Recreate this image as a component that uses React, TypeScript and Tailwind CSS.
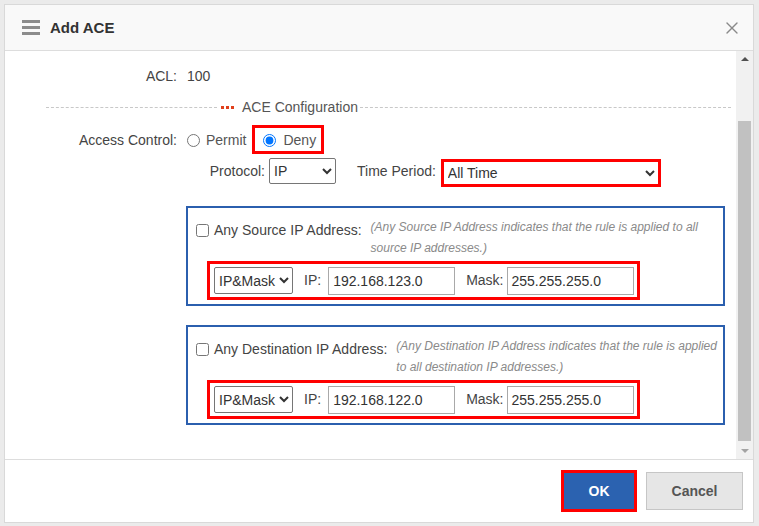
import { X } from "lucide-react";

const font = { fontFamily: '"Liberation Sans", Arial, sans-serif' };

function Dots() {
  return (
    <span className="flex items-center gap-[2px] mr-[8px]">
      <span className="w-[3px] h-[3px] bg-[#e0401c]" />
      <span className="w-[3px] h-[3px] bg-[#e0401c]" />
      <span className="w-[3px] h-[3px] bg-[#e0401c]" />
    </span>
  );
}

function AddressBox({
  label,
  hint,
  ip,
}: {
  label: string;
  hint: string;
  ip: string;
}) {
  return (
    <div className="ml-[181px] mt-[19px] w-[539px] border-2 border-[#2b5fae] pt-[8px] pb-[4px]">
      <div className="flex items-start pl-[8px] pr-[4px]">
        <input type="checkbox" className="mt-[8px] w-[13px] h-[13px] shrink-0" />
        <span className="ml-[5px] mt-[4px] leading-[20px] text-[14px] text-[#444] whitespace-nowrap">{label}</span>
        <span className="ml-[9px] mt-[1px] flex-1 text-[12px] italic leading-[21px] text-[#8a8a8a]">{hint}</span>
      </div>
      <div className="ml-[19px] mt-[2px] w-[433px] h-[39px] border-[3px] border-[#ff0000] flex items-center pl-[4px]">
        <select className="w-[79px] h-[27px] border border-[#767676] rounded-[2px] text-[14px] text-[#333] pl-0 pr-0 bg-white">
          <option>IP&amp;Mask</option>
        </select>
        <span className="ml-[11px] text-[14px] text-[#444]">IP:</span>
        <input
          readOnly
          value={ip}
          className="ml-[7px] w-[127px] h-[28px] border border-[#a9a9a9] pl-[4px] text-[14px] text-[#333]"
        />
        <span className="ml-[11px] text-[14px] text-[#444]">Mask:</span>
        <input
          readOnly
          value="255.255.255.0"
          className="ml-[4px] w-[127px] h-[28px] border border-[#a9a9a9] pl-[3px] text-[14px] text-[#333]"
        />
      </div>
    </div>
  );
}

export default function App() {
  return (
    <div className="w-[759px] h-[526px] bg-[#ebebeb] pt-[4px] pl-[4px]" style={font}>
      <div className="w-[750px] h-[519px] border border-[#d9d9d9] bg-white flex flex-col">
        {/* header */}
        <div className="h-[46px] bg-[#f9f9f9] border-b border-[#dddddd] flex items-center pl-[17px] pr-[11px] shrink-0">
          <div className="flex flex-col gap-[3px] w-[18px]">
            <span className="h-[3px] bg-[#8c8c8c]" />
            <span className="h-[3px] bg-[#8c8c8c]" />
            <span className="h-[3px] bg-[#8c8c8c]" />
          </div>
          <span className="ml-[10px] pt-[1px] text-[15px] font-bold text-[#333]">Add ACE</span>
          <X className="ml-auto w-[20px] h-[20px] text-[#8a8a8a]" strokeWidth={1.6} />
        </div>

        {/* body */}
        <div className="h-[409px] border-b border-[#dddddd] flex shrink-0">
          <div className="flex-1 pt-[15px]">
            <div className="flex h-[20px] items-center text-[14px]">
              <span className="w-[172px] text-right text-[#444]">ACL:</span>
              <span className="ml-[10px] text-[#444]">100</span>
            </div>

            <div className="mt-[11px] h-[20px] flex items-center ml-[41px] mr-[5px]">
              <span className="w-[171px] border-t border-dashed border-[#c8c8c8]" />
              <span className="ml-[4px]" />
              <Dots />
              <span className="text-[14px] text-[#555] pt-[1px]">ACE Configuration</span>
              <span className="ml-[2px] flex-1 border-t border-dashed border-[#c8c8c8]" />
            </div>

            <div className="mt-[8px] h-[29px] flex items-center text-[14px]">
              <span className="w-[172px] text-right text-[#444] pt-[1px]">Access Control:</span>
              <input type="radio" name="ac" className="ml-[10px] mt-[1px] w-[13px] h-[13px]" />
              <span className="ml-[6px] text-[#555] pt-[2px]">Permit</span>
              <div className="ml-[6px] h-[29px] border-[3px] border-[#ff0000] flex items-center pl-[8px] pr-[5px]">
                <input type="radio" name="ac" defaultChecked className="mt-[1px] w-[13px] h-[13px] accent-[#0075ff]" />
                <span className="ml-[7px] text-[#555] pt-[2px]">Deny</span>
              </div>
            </div>

            <div className="mt-[4px] flex items-start text-[14px]">
              <span className="w-[260px] text-right text-[#444] leading-[26px]">Protocol:</span>
              <select className="ml-[4px] w-[67px] h-[26px] border border-[#767676] rounded-[2px] pl-0 text-[#333] bg-white">
                <option>IP</option>
              </select>
              <span className="ml-[21px] text-[#444] leading-[26px]">Time Period:</span>
              <div className="ml-[5px] mt-[1px] w-[220px] h-[28px] border-[3px] border-[#ff0000]">
                <select className="w-full h-full text-[#333] pl-0 bg-white">
                  <option>All Time</option>
                </select>
              </div>
            </div>

            <AddressBox
              label="Any Source IP Address:"
              hint="(Any Source IP Address indicates that the rule is applied to all source IP addresses.)"
              ip="192.168.123.0"
            />
            <AddressBox
              label="Any Destination IP Address:"
              hint="(Any Destination IP Address indicates that the rule is applied to all destination IP addresses.)"
              ip="192.168.122.0"
            />
          </div>

          {/* scrollbar */}
          <div className="w-[17px] bg-[#f1f1f1] flex flex-col shrink-0">
            <div className="h-[17px] flex items-center justify-center">
              <span className="w-0 h-0 border-l-[4px] border-r-[4px] border-b-[4px] border-l-transparent border-r-transparent border-b-[#505050]" />
            </div>
            <div className="flex-1 px-[2px] pt-[53px] pb-[2px]">
              <div className="h-[320px] bg-[#c1c1c1]" />
            </div>
            <div className="h-[17px] flex items-center justify-center">
              <span className="w-0 h-0 border-l-[4px] border-r-[4px] border-t-[4px] border-l-transparent border-r-transparent border-t-[#a3a3a3]" />
            </div>
          </div>
        </div>

        {/* footer */}
        <div className="flex-1 flex items-center justify-end pr-[10px]">
          <button className="w-[76px] h-[42px] border-[3px] border-[#ff0000] bg-[#2b62b0] text-white font-bold text-[14px]">
            OK
          </button>
          <button className="ml-[9px] w-[97px] h-[38px] border border-[#c6c6c6] bg-[#e6e6e6] text-[#555] font-bold text-[14px]">
            Cancel
          </button>
        </div>
      </div>
    </div>
  );
}
